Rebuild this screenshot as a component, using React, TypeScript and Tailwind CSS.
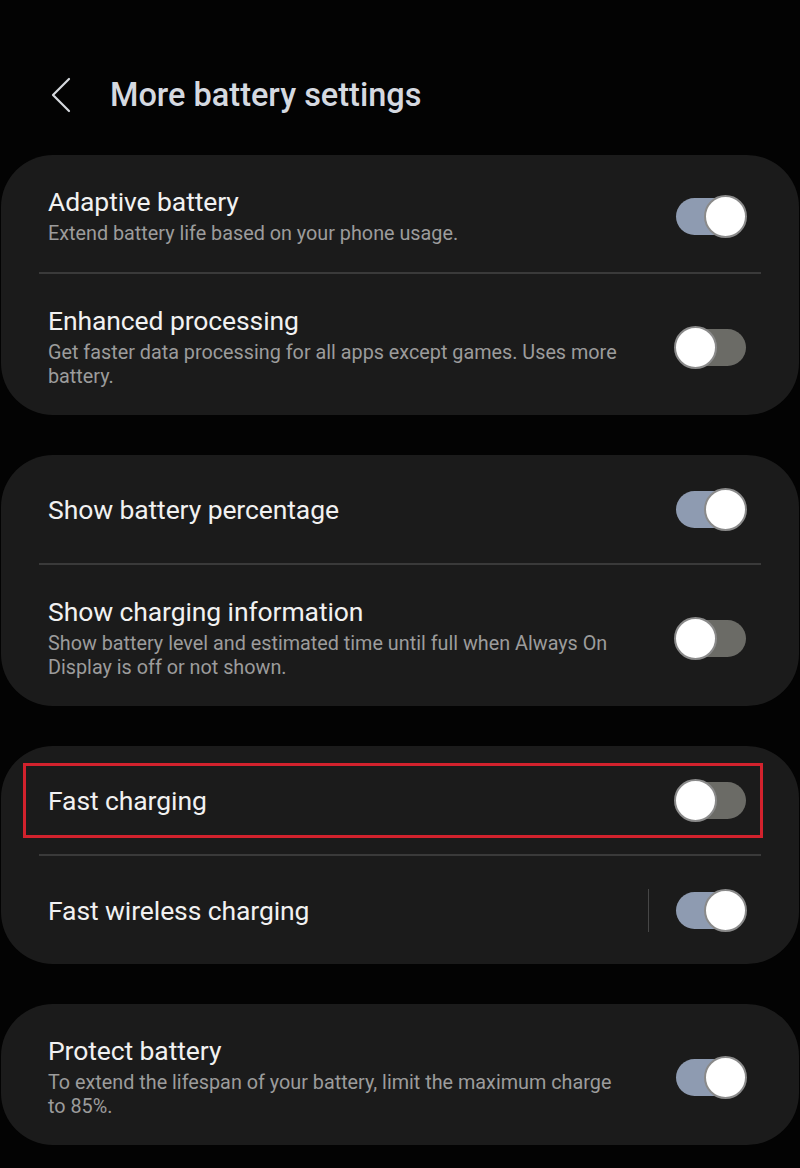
import { ReactNode } from 'react';

type Row = {
  title: string;
  desc?: string;
  on: boolean;
  highlight?: boolean;
  split?: boolean;
};

const groups: Row[][] = [
  [
    { title: 'Adaptive battery', desc: 'Extend battery life based on your phone usage.', on: true },
    {
      title: 'Enhanced processing',
      desc: 'Get faster data processing for all apps except games. Uses more battery.',
      on: false,
    },
  ],
  [
    { title: 'Show battery percentage', on: true },
    {
      title: 'Show charging information',
      desc: 'Show battery level and estimated time until full when Always On Display is off or not shown.',
      on: false,
    },
  ],
  [
    { title: 'Fast charging', on: false, highlight: true },
    { title: 'Fast wireless charging', on: true, split: true },
  ],
  [
    {
      title: 'Protect battery',
      desc: 'To extend the lifespan of your battery, limit the maximum charge to 85%.',
      on: true,
    },
  ],
];

const Toggle = ({ on }: { on: boolean }) => (
  <div className="relative w-[73px] h-[43px] shrink-0">
    <div
      className={`absolute left-[2px] right-[1px] top-[3px] h-[37px] rounded-full ${
        on ? 'bg-[#8e9bb1]' : 'bg-[#6b6b66]'
      }`}
    />
    <div
      className={`absolute top-0 w-[43px] h-[43px] rounded-full bg-white border-[2px] border-[#8a8a8a] ${
        on ? 'right-0' : 'left-0'
      }`}
    />
  </div>
);

const SettingRow = ({ row }: { row: Row }) => {
  const body: ReactNode = (
    <div className="flex-1 min-w-0 pr-[44px]">
      <div className="text-[26.5px] leading-[30px] text-[#f1f1f1] tracking-[-0.1px]">{row.title}</div>
      {row.desc && (
        <div className="mt-[5px] text-[19.8px] leading-[24px] text-[#9c9c9c]">{row.desc}</div>
      )}
    </div>
  );

  return (
    <div
      className={`relative flex items-center pl-[47px] pr-[52px] ${
        row.desc ? 'pt-[32px] pb-[26px]' : 'pt-[33px] pb-[32px]'
      }`}
    >
      {body}
      {row.split && <div className="w-px h-[43px] bg-[#464646] mr-[25px]" />}
      <Toggle on={row.on} />
      {row.highlight && (
        <div className="absolute left-[22px] right-[36px] top-[17px] h-[75px] border-[3px] border-[#d2222d]" />
      )}
    </div>
  );
};

export default function App() {
  return (
    <div
      className="h-[1168px] w-[800px] overflow-hidden bg-[#030303] pt-[74px]"
      style={{ fontFamily: 'Roboto, "Noto Sans", sans-serif' }}
    >
      <header className="flex items-center h-[42px] mb-[39px] pl-[50px]">
        <svg width="22" height="36" viewBox="0 0 22 36" fill="none">
          <path d="M19 2 L3 18 L19 34" stroke="#d6d9de" strokeWidth="2.2" strokeLinecap="round" strokeLinejoin="round" />
        </svg>
        <h1 className="ml-[38px] text-[32.5px] font-medium text-[#d5d9e0]">
          More battery settings
        </h1>
      </header>

      <div className="flex flex-col gap-[40px] px-px">
        {groups.map((group, gi) => (
          <section key={gi} className="rounded-[52px] bg-[#1b1b1b]">
            {group.map((row, ri) => (
              <div key={row.title}>
                {ri > 0 && <div className="mx-[38px] h-[2px] bg-[#3a3a3a]" />}
                <SettingRow row={row} />
              </div>
            ))}
          </section>
        ))}
      </div>
    </div>
  );
}
